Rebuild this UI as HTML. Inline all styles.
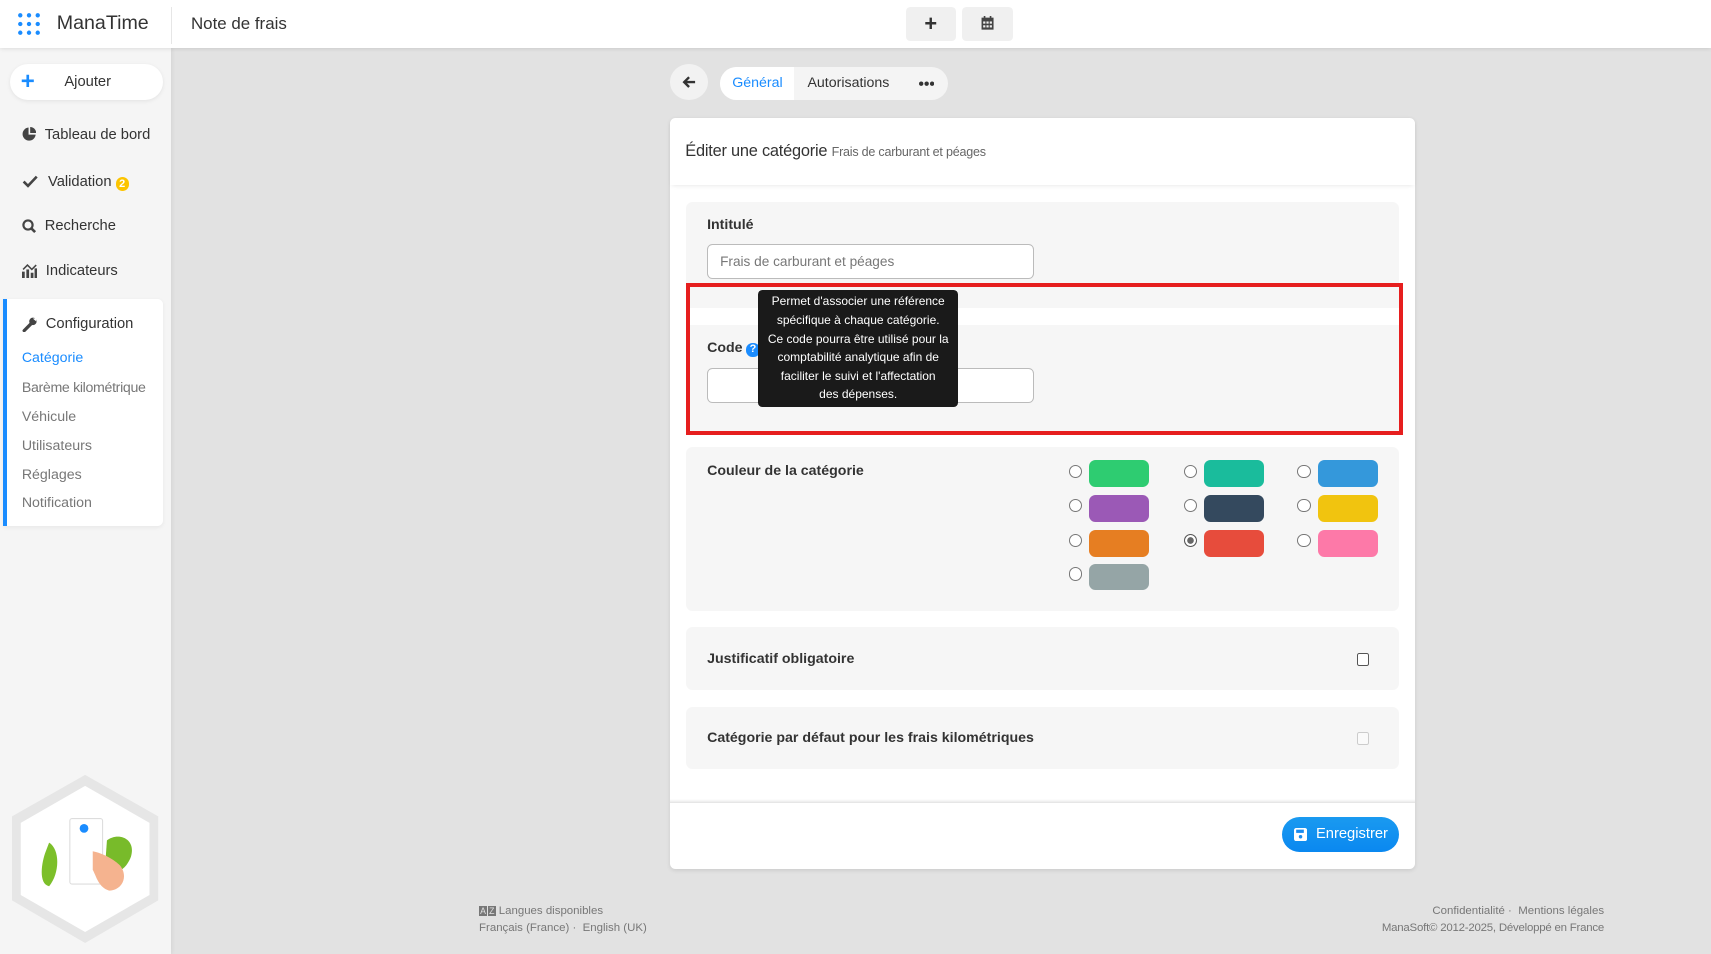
<!DOCTYPE html>
<html><head><meta charset="utf-8">
<style>
html{zoom:1.0912}
*{box-sizing:border-box;margin:0;padding:0}
body{width:1568px;height:874px;overflow:hidden;background:#e2e2e2;font-family:"Liberation Sans",Arial,sans-serif;color:#333;position:relative;font-size:14px}
.abs{position:absolute}
.top{left:0;top:0;width:1568px;height:44px;background:#fff;box-shadow:0 1px 4px rgba(0,0,0,.12);z-index:3}
.side{left:0;top:44px;width:157px;height:830px;background:#f5f5f5;box-shadow:1px 0 4px rgba(0,0,0,.08)}
.mi{left:20px;font-size:13.5px;color:#333;display:flex;align-items:center;gap:8px}
.sub{left:20px;font-size:13px;color:#777}
.card{left:614px;top:108px;width:683px;height:688px;background:#fff;border-radius:5px;box-shadow:0 1px 4px rgba(0,0,0,.1)}
.sec{background:#f6f6f6;border-radius:6px}
.lbl{font-size:13px;font-weight:bold;color:#333}
.inp{background:#fff;border:1px solid #bbb;border-radius:5px;width:300px;height:32px}
.rad{width:12px;height:12px;border:1px solid #777;border-radius:50%;background:#fff}
.sw{width:55px;height:24px;border-radius:6px}
.ft{font-size:10.5px;color:#777}
</style></head><body>
<div class="abs top">
  <div class="abs" style="left:16px;top:11px;width:22px;height:22px">
    <svg width="22" height="22"><g fill="#1a8cff"><circle cx="3" cy="3" r="2"/><circle cx="11" cy="3" r="2"/><circle cx="19" cy="3" r="2"/><circle cx="3" cy="11" r="2"/><circle cx="11" cy="11" r="2"/><circle cx="19" cy="11" r="2"/><circle cx="3" cy="19" r="2"/><circle cx="11" cy="19" r="2"/><circle cx="19" cy="19" r="2"/></g></svg>
  </div>
  <div class="abs" style="left:52px;top:11px;font-size:18px;color:#333">ManaTime</div>
  <div class="abs" style="left:157px;top:6px;width:1px;height:34px;background:#e6e6e6"></div>
  <div class="abs" style="left:175px;top:13px;font-size:15.5px;color:#333">Note de frais</div>
  <div class="abs" style="left:830px;top:6px;width:46px;height:32px;background:#f0f0f0;border-radius:4px;text-align:center;line-height:31px;font-size:20px;font-weight:bold;color:#333">+</div>
  <div class="abs" style="left:882px;top:6px;width:46px;height:32px;background:#f0f0f0;border-radius:4px">
    <svg class="abs" style="left:17px;top:9px" width="12" height="13"><rect x="0.5" y="1.5" width="11" height="11" fill="#444"/><rect x="2.5" y="0" width="1.5" height="3" fill="#444"/><rect x="8" y="0" width="1.5" height="3" fill="#444"/><g fill="#f0f0f0"><rect x="2" y="5" width="2" height="2"/><rect x="5" y="5" width="2" height="2"/><rect x="8" y="5" width="2" height="2"/><rect x="2" y="8.5" width="2" height="2"/><rect x="5" y="8.5" width="2" height="2"/><rect x="8" y="8.5" width="2" height="2"/></g></svg>
  </div>
</div>

<div class="abs side"></div>
<div class="abs" style="left:9px;top:59px;width:140px;height:33px;background:#fff;border-radius:17px;box-shadow:0 1px 4px rgba(0,0,0,.08)">
  <div class="abs" style="left:10px;top:3px;color:#1a8cff;font-size:22px;font-weight:bold">+</div>
  <div class="abs" style="left:50px;top:9px;font-size:13.5px">Ajouter</div>
</div>
<div class="abs mi" style="top:116px"><svg width="13" height="13"><path d="M6 0.5A6 6 0 1 0 12.5 7H6Z" fill="#444"/><path d="M7.5 0A5.5 5.5 0 0 1 13 5.5H7.5Z" fill="#444"/></svg>Tableau de bord</div>
<div class="abs mi" style="top:158px"><svg width="16" height="12"><path d="M1.5 6L5.5 10L13.5 1.5" stroke="#444" stroke-width="2.4" fill="none"/></svg>Validation<span style="background:#fcc400;color:#fff;border-radius:7px;font-size:10px;font-weight:bold;padding:1px 3px;margin-left:-4px;margin-top:4px">2</span></div>
<div class="abs mi" style="top:200px"><svg width="13" height="14"><circle cx="5.5" cy="5.5" r="4.2" stroke="#444" stroke-width="2" fill="none"/><path d="M8.5 8.5L12 12" stroke="#444" stroke-width="2.4"/></svg>Recherche</div>
<div class="abs mi" style="top:241px"><svg width="14" height="13"><g fill="#444"><rect x="0" y="7" width="2.5" height="6"/><rect x="4" y="5" width="2.5" height="8"/><rect x="8" y="8" width="2.5" height="5"/><rect x="11.5" y="4" width="2.5" height="9"/></g><path d="M1 5L5 1L9 5L13 1" stroke="#444" fill="none" stroke-width="1.4"/></svg>Indicateurs</div>
<div class="abs" style="left:3px;top:274px;width:146px;height:208px;background:#fff;border-radius:0 5px 5px 0;border-left:4px solid #1a8cff;box-shadow:0 1px 4px rgba(0,0,0,.06)"></div>
<div class="abs mi" style="top:290px"><svg width="14" height="14"><path d="M2 12.5L8 6.5" stroke="#444" stroke-width="3" stroke-linecap="round"/><circle cx="10" cy="4" r="3.4" fill="#444"/><path d="M10 1.5L13 1V4" fill="#fff"/></svg>Configuration</div>
<div class="abs sub" style="top:321px;color:#1a8cff">Catégorie</div>
<div class="abs sub" style="top:348px;letter-spacing:-0.3px">Barème kilométrique</div>
<div class="abs sub" style="top:375px">Véhicule</div>
<div class="abs sub" style="top:401px">Utilisateurs</div>
<div class="abs sub" style="top:428px">Réglages</div>
<div class="abs sub" style="top:454px">Notification</div>
<svg class="abs" style="left:0;top:700px" width="157" height="174">
  <polygon points="78,10 145,48 145,125 78,164 11,125 11,48" fill="#e6e6e6"/>
  <polygon points="78,20 137,54 137,120 78,154 19,120 19,54" fill="#fff"/>
  <path d="M45 72C55 78 55 100 45 112C35 110 38 90 42 80Z" fill="#7cbf2a"/>
  <path d="M98 70C108 62 125 68 120 85C115 98 105 102 96 98Z" fill="#78bb2a"/>
  <rect x="64" y="50" width="30" height="60" rx="2" fill="#fff" stroke="#ddd"/>
  <circle cx="77" cy="59" r="4" fill="#1a8cff"/>
  <path d="M85 80C95 82 105 88 110 93C118 103 112 116 100 116C90 113 88 102 85 97Z" fill="#f5b38f"/>
</svg>

<!-- tabs -->
<div class="abs" style="left:614px;top:59px;width:35px;height:33px;border-radius:50%;background:#f2f2f2">
  <svg class="abs" style="left:11px;top:10px" width="13" height="13"><path d="M12 6.5H2M6.5 2L2 6.5L6.5 11" stroke="#333" stroke-width="2.2" fill="none"/></svg>
</div>
<div class="abs" style="left:660px;top:61px;width:209px;height:31px;border-radius:16px;background:#f4f4f4;overflow:hidden">
  <div class="abs" style="left:0;top:0;width:68px;height:31px;background:#fff"></div>
  <div class="abs" style="left:11px;top:8px;font-size:13px;color:#1a8cff">Général</div>
  <div class="abs" style="left:80px;top:8px;font-size:13px;color:#333">Autorisations</div>
  <svg class="abs" style="left:182px;top:13px" width="14" height="5"><g fill="#333"><circle cx="2" cy="2.5" r="2"/><circle cx="7" cy="2.5" r="2"/><circle cx="12" cy="2.5" r="2"/></g></svg>
</div>

<div class="abs card">
  <div class="abs" style="left:0;top:0;width:683px;height:62px;box-shadow:0 3px 4px -2px rgba(0,0,0,.1)"></div>
  <div class="abs" style="left:14px;top:22px;font-size:15px;color:#333;letter-spacing:-0.2px">Éditer une catégorie <span style="font-size:11.5px;color:#666">Frais de carburant et péages</span></div>
  <div class="abs sec" style="left:15px;top:77px;width:653px;height:80px;border-radius:6px 6px 0 0"></div>
  <div class="abs lbl" style="left:34px;top:91px">Intitulé</div>
  <div class="abs inp" style="left:34px;top:116px"><span class="abs" style="left:11px;top:8px;font-size:12.5px;color:#777">Frais de carburant et péages</span></div>
  <div class="abs" style="left:15px;top:151px;width:657px;height:140px;border:4px solid #e61e1e;background:#f6f6f6">
    <div class="abs" style="left:0;top:20px;width:649px;height:15px;background:#fff"></div>
  </div>
  <div class="abs lbl" style="left:34px;top:204px">Code <span style="display:inline-block;width:12px;height:12px;border-radius:50%;background:#1a8cff;color:#fff;font-size:10px;text-align:center;line-height:12px">?</span></div>
  <div class="abs inp" style="left:34px;top:229px"></div>
  <div class="abs" style="left:81px;top:158px;width:183px;height:107px;background:#1a1a1a;border-radius:4px;color:#fff;font-size:11px;text-align:center;line-height:17px;padding-top:2px">Permet d'associer une référence<br>spécifique à chaque catégorie.<br>Ce code pourra être utilisé pour la<br>comptabilité analytique afin de<br>faciliter le suivi et l'affectation<br>des dépenses.</div>

  <div class="abs sec" style="left:15px;top:302px;width:653px;height:150px"></div>
  <div class="abs lbl" style="left:34px;top:316px">Couleur de la catégorie</div>
  <div class="abs rad" style="left:366px;top:318px"></div><div class="abs sw" style="left:384px;top:314px;background:#2ecc71"></div>
  <div class="abs rad" style="left:471px;top:318px"></div><div class="abs sw" style="left:489px;top:314px;background:#1abc9c"></div>
  <div class="abs rad" style="left:575px;top:318px"></div><div class="abs sw" style="left:594px;top:314px;background:#3498db"></div>
  <div class="abs rad" style="left:366px;top:349px"></div><div class="abs sw" style="left:384px;top:346px;background:#9b59b6"></div>
  <div class="abs rad" style="left:471px;top:349px"></div><div class="abs sw" style="left:489px;top:346px;background:#34495e"></div>
  <div class="abs rad" style="left:575px;top:349px"></div><div class="abs sw" style="left:594px;top:346px;background:#f1c40f"></div>
  <div class="abs rad" style="left:366px;top:381px"></div><div class="abs sw" style="left:384px;top:378px;background:#e67e22"></div>
  <div class="abs rad" style="left:471px;top:381px;border-color:#555;box-shadow:inset 0 0 0 2px #fff;background:#666"></div><div class="abs sw" style="left:489px;top:378px;background:#e74c3c"></div>
  <div class="abs rad" style="left:575px;top:381px"></div><div class="abs sw" style="left:594px;top:378px;background:#fd79a8"></div>
  <div class="abs rad" style="left:366px;top:412px"></div><div class="abs sw" style="left:384px;top:409px;background:#95a5a6"></div>

  <div class="abs sec" style="left:15px;top:467px;width:653px;height:57px"></div>
  <div class="abs lbl" style="left:34px;top:489px">Justificatif obligatoire</div>
  <div class="abs" style="left:630px;top:490px;width:11px;height:12px;border:1px solid #555;border-radius:2px;background:#fff"></div>
  <div class="abs sec" style="left:15px;top:540px;width:653px;height:57px"></div>
  <div class="abs lbl" style="left:34px;top:561px">Catégorie par défaut pour les frais kilométriques</div>
  <div class="abs" style="left:630px;top:563px;width:11px;height:12px;border:1px solid #ccc;border-radius:2px;background:#fafafa"></div>

  <div class="abs" style="left:0;top:624px;width:683px;height:3px;background:linear-gradient(#fff,#ececec)"></div>
  <div class="abs" style="left:0;top:627px;width:683px;height:1px;background:#e6e6e6"></div>
  <div class="abs" style="left:561px;top:641px;width:107px;height:32px;border-radius:16px;background:linear-gradient(#1a9af0,#0a88f0);color:#fff;font-size:13.5px">
    <svg class="abs" style="left:11px;top:10px" width="12" height="12"><rect width="12" height="12" rx="2" fill="#fff"/><rect x="2" y="1.5" width="7" height="3" fill="#1a8cf0"/><circle cx="6" cy="8" r="1.6" fill="#1a8cf0"/></svg>
    <span class="abs" style="left:31px;top:8px">Enregistrer</span>
  </div>
</div>

<div class="abs ft" style="left:439px;top:829px"><span style="font-size:8px;background:#777;color:#e2e2e2;padding:0 1px">A</span><span style="font-size:8px;background:#777;color:#e2e2e2;padding:0 1px;margin-left:1px">Z</span> Langues disponibles</div>
<div class="abs ft" style="left:439px;top:845px">Français (France) ·&nbsp; English (UK)</div>
<div class="abs ft" style="left:1200px;top:829px;width:270px;text-align:right">Confidentialité · &nbsp;Mentions légales</div>
<div class="abs ft" style="left:1170px;top:845px;width:300px;text-align:right;letter-spacing:-0.2px">ManaSoft© 2012-2025, Développé en France</div>
</body></html>
